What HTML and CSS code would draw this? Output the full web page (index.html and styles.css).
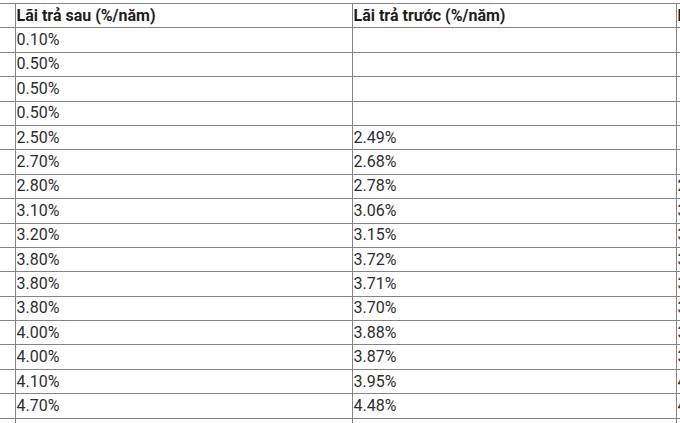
FILE: index.html
```html
<!DOCTYPE html>
<html lang="vi">
<head>
<meta charset="utf-8">
<link rel="stylesheet" href="styles.css">
</head>
<body>
<div class="viewport">
<table class="rates">
  <thead>
    <tr><th class="c0"></th><th class="c1">Lãi trả sau (%/năm)</th><th class="c2">Lãi trả trước (%/năm)</th><th class="c3">Lãi trả hàng tháng (%/năm)</th></tr>
  </thead>
  <tbody>
    <tr><td class="c0"></td><td>0.10%</td><td></td><td></td></tr>
    <tr><td class="c0"></td><td>0.50%</td><td></td><td></td></tr>
    <tr><td class="c0"></td><td>0.50%</td><td></td><td></td></tr>
    <tr><td class="c0"></td><td>0.50%</td><td></td><td></td></tr>
    <tr><td class="c0"></td><td>2.50%</td><td>2.49%</td><td></td></tr>
    <tr><td class="c0"></td><td>2.70%</td><td>2.68%</td><td></td></tr>
    <tr><td class="c0"></td><td>2.80%</td><td>2.78%</td><td>2.79%</td></tr>
    <tr><td class="c0"></td><td>3.10%</td><td>3.06%</td><td>3.09%</td></tr>
    <tr><td class="c0"></td><td>3.20%</td><td>3.15%</td><td>3.18%</td></tr>
    <tr><td class="c0"></td><td>3.80%</td><td>3.72%</td><td>3.77%</td></tr>
    <tr><td class="c0"></td><td>3.80%</td><td>3.71%</td><td>3.76%</td></tr>
    <tr><td class="c0"></td><td>3.80%</td><td>3.70%</td><td>3.75%</td></tr>
    <tr><td class="c0"></td><td>4.00%</td><td>3.88%</td><td>3.94%</td></tr>
    <tr><td class="c0"></td><td>4.00%</td><td>3.87%</td><td>3.93%</td></tr>
    <tr><td class="c0"></td><td>4.10%</td><td>3.95%</td><td>4.02%</td></tr>
    <tr><td class="c0"></td><td>4.70%</td><td>4.48%</td><td>4.59%</td></tr>
    <tr><td class="c0"></td><td>4.80%</td><td>4.56%</td><td>4.68%</td></tr>
  </tbody>
</table>
</div>
</body>
</html>
```
FILE: styles.css
```css
html, body {
  margin: 0;
  padding: 0;
  background: #ffffff;
}
.viewport {
  width: 680px;
  height: 423px;
  overflow: hidden;
  padding-top: 3px;
  box-sizing: border-box;
}
.rates {
  border-collapse: collapse;
  table-layout: fixed;
  width: 900px;
  font-family: Roboto, "Noto Sans", sans-serif;
  font-size: 16px;
  color: #2e2e2e;
}
.rates th, .rates td {
  border: 1px solid #858585;
  height: 24.4px;
  padding: 0 1px;
  text-align: left;
  vertical-align: middle;
  white-space: nowrap;
  overflow: hidden;
  box-sizing: border-box;
  line-height: 18px;
}
.rates th {
  font-weight: bold;
  color: #1e1e1e;
}
.rates .c0 { width: 15px; border-left: none; }
.rates .c1 { width: 337px; }
.rates .c2 { width: 324px; }
.rates .c3 { width: 224px; }
```
